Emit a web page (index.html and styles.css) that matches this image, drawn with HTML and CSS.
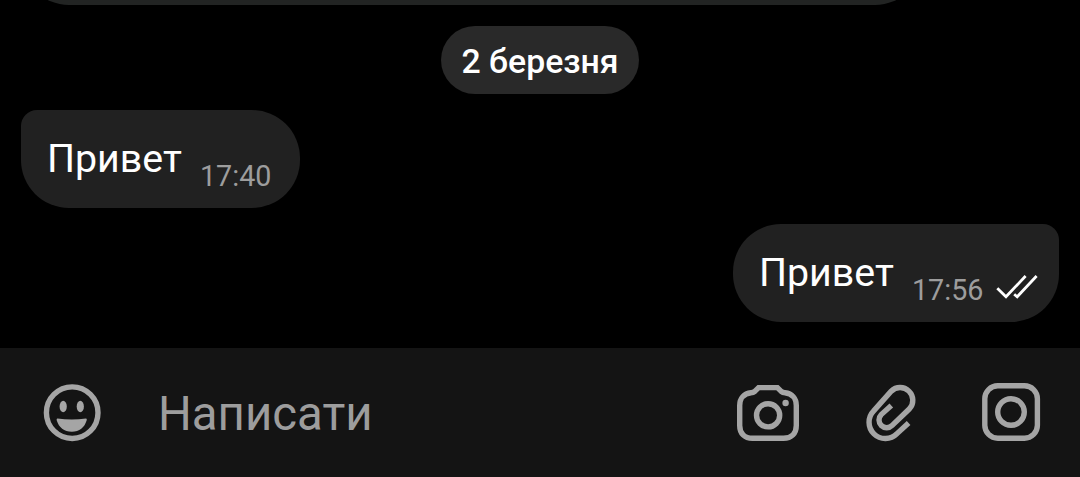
FILE: index.html
```
<!DOCTYPE html>
<html lang="uk">
<head>
  <meta charset="utf-8">
  <title>Чат</title>
  <link rel="stylesheet" href="styles.css">
</head>
<body>
  <main class="messages">
    <div class="bubble bubble-previous"></div>
    <div class="date">2 березня</div>
    <div class="bubble bubble-in">
      <span class="text">Привет</span>
      <span class="time">17:40</span>
    </div>
    <div class="bubble bubble-out">
      <span class="text">Привет</span>
      <span class="time">17:56</span>
      <svg class="checks" viewBox="0 0 42 25" width="42" height="25">
        <path d="M1.3 14.2 10 22.8 29.6 2M18.2 20.2 21.2 22.8 40.6 2"/>
      </svg>
    </div>
  </main>

  <footer class="composer">
    <svg class="icon" viewBox="12 12 60 60" width="60" height="60">
      <circle cx="42.2" cy="42.7" r="25.8"/>
      <g class="solid">
        <ellipse cx="33.2" cy="36.5" rx="3.6" ry="5.8"/>
        <ellipse cx="50.3" cy="36.5" rx="3.6" ry="5.8"/>
        <path d="M27.4 48.4Q41.8 50.4 56 48.4Q57.2 48.6 56.7 50.2C54.5 57.5 49.5 61.7 41.8 61.7S28.9 57.5 26.7 50.2Q26.3 48.5 27.4 48.4Z"/>
      </g>
    </svg>
    <div class="placeholder">Написати</div>
    <div class="actions">
      <svg class="icon" viewBox="10 12 66 60" width="66" height="60">
        <path d="M33.6 17.6H52.4L56.2 21.4Q57.8 22.8 60 22.8C67 23.6 71.3 28.5 71.3 35.5V55.5C71.3 63.5 66.5 68.3 58.5 68.3H27.5C19.5 68.3 14.7 63.5 14.7 55.5V35.5C14.7 28.5 19 23.6 26 22.8Q28.2 22.8 29.8 21.4Z"/>
        <circle cx="43.1" cy="45.3" r="11.6"/>
        <circle class="solid" cx="60.6" cy="33" r="3.2"/>
      </svg>
      <svg class="icon" viewBox="14 12 54 60" width="54" height="60">
        <path d="M58.6 53 47 63.6A16.2 16.2 0 0 1 23.7 40.8L41.2 21.2A12.7 12.7 0 0 1 59.5 38.8L42.2 55.4A7.7 7.7 0 0 1 31.2 44.6L41.3 35.6"/>
      </svg>
      <svg class="icon" viewBox="10 12 62 60" width="62" height="60">
        <rect x="14.8" y="15.8" width="52.6" height="52.4" rx="13"/>
        <circle cx="41" cy="42" r="13.3"/>
      </svg>
    </div>
  </footer>
</body>
</html>
```
FILE: styles.css
```
:root {
  --background: #000000;
  --bubble: #212121;
  --bar: #141414;
  --date: #292929;
  --muted: #9d9d9d;
}

* {
  box-sizing: border-box;
}

body {
  margin: 0;
  height: 477px;
  overflow: hidden;
  display: flex;
  flex-direction: column;
  font-family: Roboto, "Liberation Sans", sans-serif;
  background: var(--background);
  color: #ffffff;
}

.messages {
  height: 348px;
  padding: 0 21px 26px;
  display: flex;
  flex-direction: column;
  justify-content: flex-end;
}

.bubble {
  height: 98px;
  flex-shrink: 0;
  display: flex;
  padding-left: 26px;
  border-radius: 48px;
  background: var(--bubble);
  white-space: nowrap;
}

.bubble-previous {
  width: 902px;
  background: #222423;
}

.bubble-in {
  width: 279px;
  align-self: flex-start;
  border-top-left-radius: 16px;
}

.bubble-out {
  width: 326px;
  margin-top: 16px;
  align-self: flex-end;
  border-top-right-radius: 16px;
}

.date {
  width: 198px;
  height: 68px;
  flex-shrink: 0;
  margin: 21px auto 16px;
  border-radius: 34px;
  background: var(--date);
  font-size: 33.8px;
  font-weight: 500;
  line-height: 71px;
  text-align: center;
}

.text {
  width: 153px;
  font-size: 39.3px;
  line-height: 99px;
}

.time {
  width: 84px;
  padding-top: 50px;
  color: var(--muted);
  font-size: 28.7px;
  line-height: 32px;
}

.checks {
  margin-top: 50px;
  fill: none;
  stroke: #ffffff;
  stroke-width: 2.8;
}

.composer {
  height: 129px;
  padding: 2px 38px 4px 42px;
  display: flex;
  align-items: center;
  background: var(--bar);
}

.placeholder {
  flex: 1;
  margin-left: 56px;
  padding-top: 5px;
  color: var(--muted);
  font-size: 47.4px;
  line-height: 60px;
}

.actions {
  display: flex;
  gap: 62.5px;
}

.icon {
  display: block;
  fill: none;
  stroke: #a5a5a5;
  stroke-width: 5.4;
}

.solid {
  fill: #a5a5a5;
  stroke: none;
}
```
